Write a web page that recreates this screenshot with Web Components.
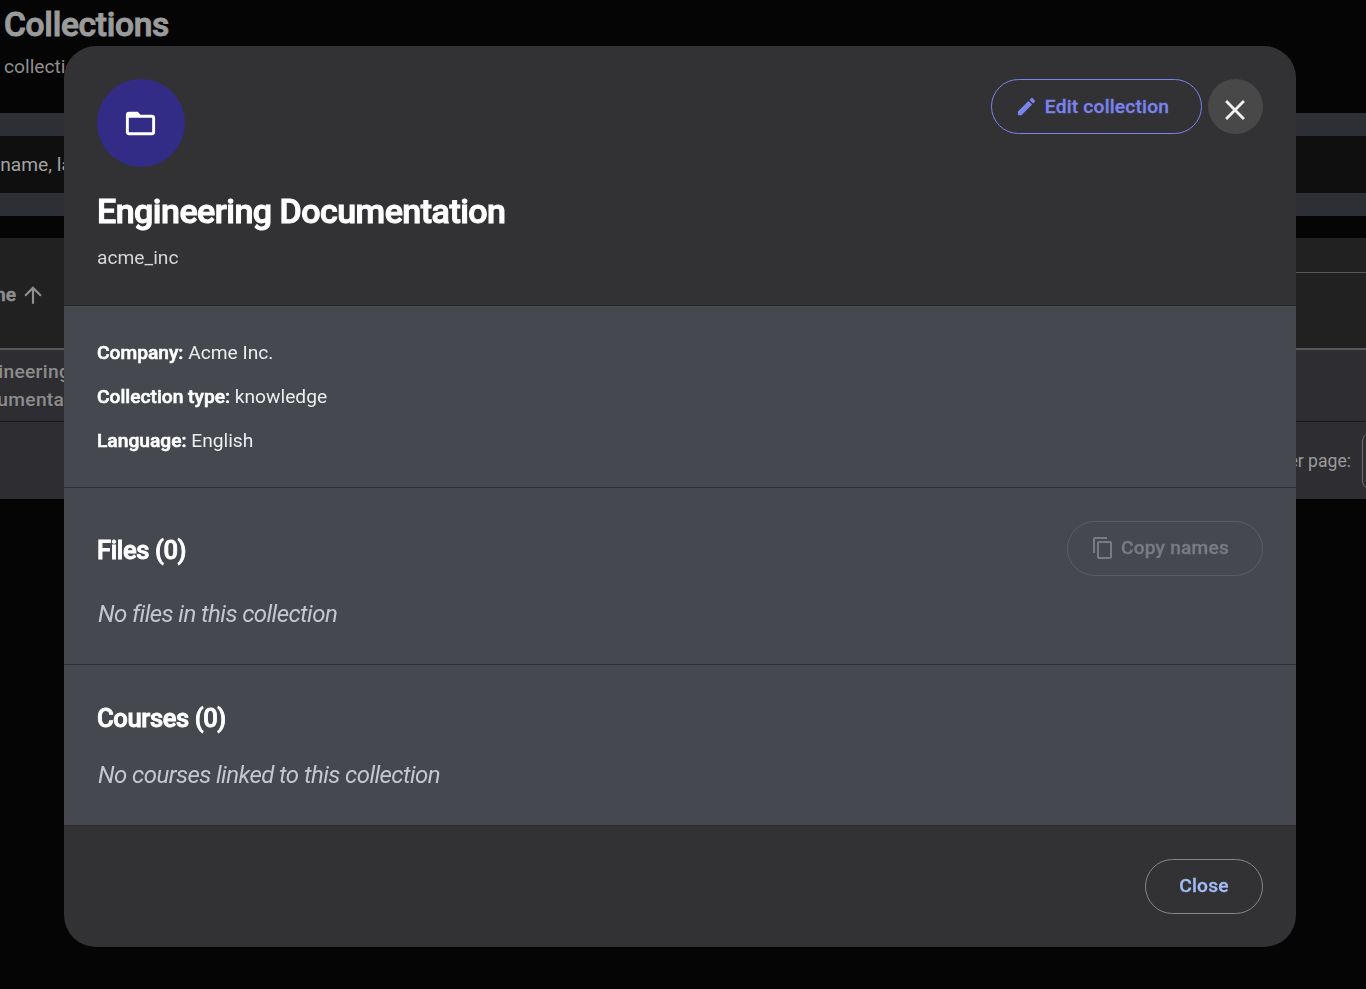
<!DOCTYPE html>
<html lang="en">
<head>
<meta charset="utf-8">
<title>Collections</title>
<style>
  html, body { margin: 0; height: 989px; overflow: hidden; background: #050505; font-family: Roboto, "Liberation Sans", sans-serif; }
</style>
</head>
<body>
<collections-page></collections-page>
<collection-dialog></collection-dialog>

<script>
const ICONS = {
  arrow: 'M4 12l1.41 1.41L11 7.83V20h2V7.83l5.58 5.59L20 12l-8-8-8 8z',
  edit: 'M3 17.25V21h3.75L17.81 9.94l-3.75-3.75L3 17.25zM20.71 7.04c.39-.39.39-1.02 0-1.41l-2.34-2.34c-.39-.39-1.02-.39-1.41 0l-1.83 1.83 3.75 3.75 1.83-1.83z',
  close: 'M19 6.41 17.59 5 12 10.59 6.41 5 5 6.41 10.59 12 5 17.59 6.41 19 12 13.41 17.59 19 19 17.59 13.41 12z',
  copy: 'M16 1H4c-1.1 0-2 .9-2 2v14h2V3h12V1zm3 4H8c-1.1 0-2 .9-2 2v14c0 1.1.9 2 2 2h11c1.1 0 2-.9 2-2V7c0-1.1-.9-2-2-2zm0 16H8V7h11v14z',
  folder: 'M20 6h-8l-2-2H4c-1.1 0-1.99.9-1.99 2L2 18c0 1.1.9 2 2 2h16c1.1 0 2-.9 2-2V8c0-1.1-.9-2-2-2zm0 12H4V8h16v10z'
};

class MatIcon extends HTMLElement {
  connectedCallback() {
    const size = this.getAttribute('size') || 24;
    this.attachShadow({ mode: 'open' });
    this.shadowRoot.innerHTML = `
      <style>
        :host { display: inline-flex; flex: none; }
        svg { display: block; fill: currentColor; }
      </style>
      <svg width="${size}" height="${size}" viewBox="0 0 24 24"><path d="${ICONS[this.getAttribute('name')]}"/></svg>
    `;
  }
}
customElements.define('mat-icon', MatIcon);

class PillButton extends HTMLElement {
  connectedCallback() {
    this.attachShadow({ mode: 'open' });
    this.shadowRoot.innerHTML = `
      <style>
        :host {
          display: inline-flex;
          align-items: center;
          justify-content: center;
          gap: 6px;
          box-sizing: border-box;
          height: 55px;
          padding-bottom: 2px;
          border: 1px solid var(--line);
          border-radius: 28px;
          color: var(--ink);
          font: 500 19.2px/1 Roboto, sans-serif;
          letter-spacing: 0.2px;
          -webkit-text-stroke: 0.3px;
        }
      </style>
      <slot></slot>
    `;
  }
}
customElements.define('pill-button', PillButton);

class CollectionsPage extends HTMLElement {
  connectedCallback() {
    this.attachShadow({ mode: 'open' });
    this.shadowRoot.innerHTML = `
      <style>
        :host { display: block; width: 1366px; color: #9a9a9a; overflow: hidden; }
        .top { height: 113px; box-sizing: border-box; padding: 7px 4px 0; }
        h1 { margin: 0; font: 500 33.6px/36px Roboto, sans-serif; letter-spacing: -0.3px; -webkit-text-stroke: 1px; color: #9b9b9b; }
        .sub { margin-top: 11px; font: 400 19.2px/26px Roboto, sans-serif; color: #8f8f8f; }
        .band { height: 23px; background: #2e2f34; }
        .search { height: 57px; background: #0f0f0f; display: flex; align-items: center; font: 400 19.2px/24px Roboto, sans-serif; color: #a3a3a3; }
        .search span { margin-left: -88px; white-space: nowrap; }
        .gap { height: 22px; }
        .thead { height: 112px; background: #212121; box-sizing: border-box; display: flex; flex-direction: column; border-bottom: 2px solid #59595c; }
        .thead .rule { height: 34px; flex: none; border-bottom: 1px solid #59595c; margin-left: 1296px; }
        .thead .name { display: flex; align-items: center; gap: 4px; height: 44px; font: 500 19.2px/24px Roboto, sans-serif; -webkit-text-stroke: 0.6px; color: #8f8f8f; }
        .thead .name span { margin-left: -35px; }
        .thead .name mat-icon { -webkit-text-stroke: 0; }
        .row { height: 72px; box-sizing: border-box; background: #2e2e32; border-bottom: 1px solid #171717; padding-top: 8px; font: 500 19.2px/28px Roboto, sans-serif; letter-spacing: 0.3px; color: #8c8c8c; }
        .row span { display: block; white-space: nowrap; }
        .row .a { margin-left: -35px; }
        .row .b { margin-left: -37px; }
        .pager { height: 77px; background: #2e2e32; display: flex; align-items: center; justify-content: flex-end; gap: 11px; font: 400 17.6px/24px Roboto, sans-serif; color: #9a9a9a; margin-right: -56px; }
        .select { flex: none; width: 60px; height: 56px; box-sizing: border-box; border: 1px solid #6c6c6c; border-radius: 8px; }
      </style>
      <div class="top">
        <h1>Collections</h1>
        <div class="sub">collections</div>
      </div>
      <div class="band"></div>
      <div class="search"><span>Search by name, language</span></div>
      <div class="band"></div>
      <div class="gap"></div>
      <div class="thead">
        <div class="rule"></div>
        <div class="name"><span>Name</span><mat-icon name="arrow" size="26"></mat-icon></div>
      </div>
      <div class="row"><span class="a">Engineering</span><span class="b">Documentation</span></div>
      <div class="pager"><span>Rows per page:</span><div class="select"></div></div>
    `;
  }
}
customElements.define('collections-page', CollectionsPage);

class InfoLine extends HTMLElement {
  connectedCallback() {
    this.attachShadow({ mode: 'open' });
    this.shadowRoot.innerHTML = `
      <style>
        :host { display: block; font: 400 19.2px/24px Roboto, sans-serif; color: #ededed; }
        b { font-weight: 500; color: #fff; -webkit-text-stroke: 0.6px; }
      </style>
      <b>${this.getAttribute('label')}:</b> <slot></slot>
    `;
  }
}
customElements.define('info-line', InfoLine);

class DialogSection extends HTMLElement {
  connectedCallback() {
    this.attachShadow({ mode: 'open' });
    this.shadowRoot.innerHTML = `
      <style>
        :host { display: block; box-sizing: border-box; padding: 0 33px; border-bottom: 1px solid #2e2e30; }
        .head { display: flex; align-items: center; justify-content: space-between; }
        h2 { margin: 2px 0 0; font: 500 25.6px/32px Roboto, sans-serif; letter-spacing: -0.4px; -webkit-text-stroke: 0.85px; color: #fff; }
        .empty { margin-top: var(--gap); font: italic 400 24px/30px Roboto, sans-serif; letter-spacing: -0.57px; color: #c6c7ca; padding-left: 1px; }
      </style>
      <div class="head"><h2>${this.getAttribute('heading')}</h2><slot name="action"></slot></div>
      <div class="empty"><slot></slot></div>
    `;
  }
}
customElements.define('dialog-section', DialogSection);

class CollectionDialog extends HTMLElement {
  connectedCallback() {
    this.attachShadow({ mode: 'open' });
    this.shadowRoot.innerHTML = `
      <style>
        :host { position: fixed; left: 64px; top: 46px; width: 1232px; height: 901px; display: flex; flex-direction: column; background: #323234; border-radius: 32px; overflow: hidden; }
        header { height: 260px; box-sizing: border-box; padding: 33px 33px 0; border-bottom: 1px solid #262628; flex: none; }
        .top { display: flex; justify-content: space-between; align-items: flex-start; }
        .avatar { box-sizing: border-box; width: 88px; height: 88px; padding-right: 1px; border-radius: 50%; background: #332c87; color: #fff; display: flex; align-items: center; justify-content: center; }
        .actions { display: flex; gap: 6px; }
        .edit { width: 211px; padding: 0 9px 0 0; gap: 7px; --line: #7b83ee; --ink: #7b83ee; }
        .x { box-sizing: border-box; width: 55px; height: 55px; padding: 6px 1px 0 0; border-radius: 50%; background: #484849; color: #f0f0f0; display: flex; align-items: center; justify-content: center; }
        h1 { margin: 24px 0 0; font: 500 34px/40px Roboto, sans-serif; letter-spacing: -0.52px; -webkit-text-stroke: 1px; color: #fff; }
        .code { margin-top: 15px; font: 400 19.2px/24px Roboto, sans-serif; color: #d6d6d6; }
        main { flex: none; background: #45484f; }
        .info { height: 182px; box-sizing: border-box; padding: 35px 33px 0; display: flex; flex-direction: column; gap: 20px; border-bottom: 1px solid #2e2e30; }
        .files { height: 177px; padding-top: 33px; --gap: 23px; }
        .courses { height: 161px; padding-top: 35px; --gap: 26px; }
        .copy { width: 196px; padding-right: 10px; --line: #5a5d64; --ink: #797b81; }
        footer { flex: 1; display: flex; justify-content: flex-end; align-items: flex-start; padding: 33px 33px 0 0; }
        .done { width: 118px; --line: #87878a; --ink: #a3bcf5; }
      </style>
      <header>
        <div class="top">
          <div class="avatar"><mat-icon name="folder" size="35"></mat-icon></div>
          <div class="actions">
            <pill-button class="edit"><mat-icon name="edit" size="23"></mat-icon>Edit collection</pill-button>
            <div class="x"><mat-icon name="close" size="34"></mat-icon></div>
          </div>
        </div>
        <h1>Engineering Documentation</h1>
        <div class="code">acme_inc</div>
      </header>
      <main>
        <div class="info">
          <info-line label="Company">Acme Inc.</info-line>
          <info-line label="Collection type">knowledge</info-line>
          <info-line label="Language">English</info-line>
        </div>
        <dialog-section class="files" heading="Files (0)">
          <pill-button class="copy" slot="action"><mat-icon name="copy" size="24"></mat-icon>Copy names</pill-button>
          No files in this collection
        </dialog-section>
        <dialog-section class="courses" heading="Courses (0)">No courses linked to this collection</dialog-section>
      </main>
      <footer><pill-button class="done">Close</pill-button></footer>
    `;
  }
}
customElements.define('collection-dialog', CollectionDialog);
</script>
</body>
</html>
